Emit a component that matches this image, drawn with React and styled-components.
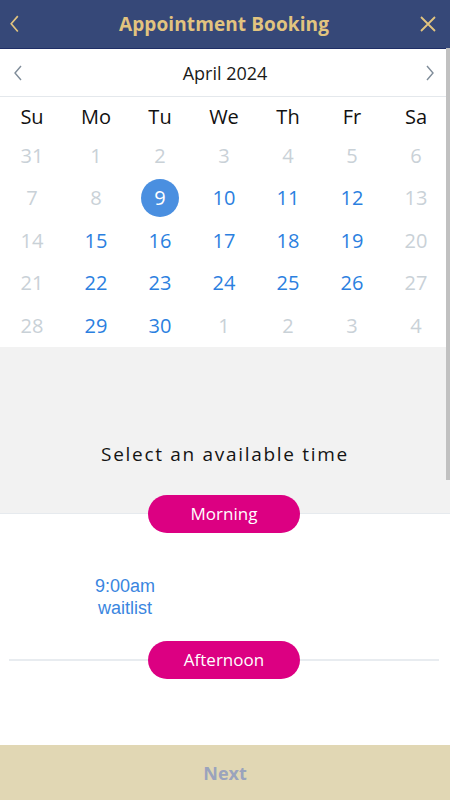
import React from "react";
import styled, { createGlobalStyle } from "styled-components";

const GlobalStyle = createGlobalStyle`
  html, body {
    margin: 0;
    padding: 0;
    background: #ffffff;
  }
  #root {
    width: 450px;
    height: 800px;
  }
`;

const Screen = styled.div`
  position: relative;
  width: 450px;
  height: 800px;
  display: flex;
  flex-direction: column;
  overflow: hidden;
  font-family: "Open Sans", "Liberation Sans", sans-serif;
  background: #ffffff;
`;

const Header = styled.header`
  height: 48px;
  flex-shrink: 0;
  background: #364878;
  border-bottom: 1px solid #1f2e66;
  display: flex;
  align-items: center;
  justify-content: space-between;
  padding: 0 8px 0 0;
`;

const Title = styled.h1`
  margin: 0 0 0 6px;
  font-size: 19px;
  font-weight: 700;
  color: #e2c47f;
  letter-spacing: 0.1px;
`;

const IconButton = styled.button`
  width: 28px;
  height: 28px;
  padding: 0;
  border: none;
  background: none;
  display: flex;
  align-items: center;
  justify-content: center;
`;

const MonthBar = styled.div`
  height: 47px;
  display: flex;
  align-items: center;
  justify-content: space-between;
  padding: 0 6px 0 4px;
  border-bottom: 1px solid #e4e8ec;
`;

const MonthLabel = styled.div`
  font-size: 18px;
  color: #1a1a1a;
  margin-left: 2px;
`;

const Grid = styled.div`
  width: 448px;
  display: grid;
  grid-template-columns: repeat(7, 64px);
  grid-auto-rows: ${(p) => p.$row}px;
  padding-top: ${(p) => p.$top || 0}px;
`;

const WeekDay = styled.div`
  display: flex;
  align-items: center;
  justify-content: center;
  font-size: 20px;
  color: #111111;
`;

const Day = styled.div`
  display: flex;
  align-items: center;
  justify-content: center;
  font-size: 20px;
  color: ${(p) => (p.$available ? "#2b7fe0" : "#c9d1d7")};
`;

const Selected = styled.span`
  width: 38px;
  height: 38px;
  border-radius: 50%;
  background: #4a8fe0;
  color: #ffffff;
  display: flex;
  align-items: center;
  justify-content: center;
`;

const Prompt = styled.div`
  height: 167px;
  background: #f2f2f2;
  border-bottom: 1px solid #e6eaee;
  display: flex;
  flex-direction: column;
  justify-content: flex-end;
  align-items: center;
  padding-bottom: 46px;
  box-sizing: border-box;
  font-size: 19px;
  letter-spacing: 1.7px;
  color: #141414;
`;

const PillRow = styled.div`
  display: flex;
  align-items: center;
  padding: 0 11px 0 9px;
  margin-top: ${(p) => p.$offset || 0}px;
`;

const Line = styled.div`
  flex: 1;
  height: 2px;
  background: ${(p) => (p.$show ? "#e8ecf0" : "transparent")};
`;

const Pill = styled.div`
  width: 152px;
  height: 38px;
  border-radius: 19px;
  background: #dc0082;
  color: #ffffff;
  font-size: 17px;
  display: flex;
  align-items: center;
  justify-content: center;
`;

const Slots = styled.div`
  display: grid;
  grid-template-columns: repeat(2, 150px);
  padding-left: 50px;
  margin-top: 42px;
  margin-bottom: 22px;
`;

const Slot = styled.div`
  text-align: center;
  font-family: "Liberation Sans", Arial, sans-serif;
  font-size: 18px;
  line-height: 22px;
  color: #3a86e0;
`;

const Spacer = styled.div`
  flex: 1;
`;

const Footer = styled.button`
  height: 55px;
  flex-shrink: 0;
  border: none;
  background: #e1d7b4;
  font-family: "Open Sans", sans-serif;
  font-size: 18px;
  font-weight: 700;
  color: #9aa3bd;
`;

const ScrollThumb = styled.div`
  position: absolute;
  right: 0;
  top: 48px;
  width: 4px;
  height: 432px;
  background: #c1c1c1;
`;

const Chevron = ({ dir, color, size = 16, stroke = 1.6 }) => (
  <svg width={size} height={size * 1.6} viewBox="0 0 10 16">
    <polyline
      points={dir === "left" ? "8,1 2,8 8,15" : "2,1 8,8 2,15"}
      fill="none"
      stroke={color}
      strokeWidth={stroke}
    />
  </svg>
);

const Close = () => (
  <svg width="16" height="16" viewBox="0 0 16 16">
    <path d="M1 1 L15 15 M15 1 L1 15" stroke="#e2c47f" strokeWidth="1.8" />
  </svg>
);

const weekDays = ["Su", "Mo", "Tu", "We", "Th", "Fr", "Sa"];
const weeks = [
  [31, 1, 2, 3, 4, 5, 6],
  [7, 8, 9, 10, 11, 12, 13],
  [14, 15, 16, 17, 18, 19, 20],
  [21, 22, 23, 24, 25, 26, 27],
  [28, 29, 30, 1, 2, 3, 4],
];

function isAvailable(w, d) {
  if (d === 0 || d === 6) return false;
  if (w === 0) return false;
  if (w === 1 && d === 1) return false;
  if (w === 4 && d > 2) return false;
  return true;
}

export default function App() {
  return (
    <Screen>
      <GlobalStyle />
      <Header>
        <IconButton>
          <Chevron dir="left" color="#e2c47f" size={11} stroke={1.5} />
        </IconButton>
        <Title>Appointment Booking</Title>
        <IconButton>
          <Close />
        </IconButton>
      </Header>
      <MonthBar>
        <IconButton>
          <Chevron dir="left" color="#7f8c99" size={10} stroke={1.4} />
        </IconButton>
        <MonthLabel>April 2024</MonthLabel>
        <IconButton>
          <Chevron dir="right" color="#7f8c99" size={10} stroke={1.4} />
        </IconButton>
      </MonthBar>
      <Grid $row={36} $top={1}>
        {weekDays.map((d) => (
          <WeekDay key={d}>{d}</WeekDay>
        ))}
      </Grid>
      <Grid $row={42.5}>
        {weeks.map((week, w) =>
          week.map((day, d) => (
            <Day key={`${w}-${d}`} $available={isAvailable(w, d)}>
              {w === 1 && day === 9 ? <Selected>9</Selected> : day}
            </Day>
          ))
        )}
      </Grid>
      <Prompt>Select an available time</Prompt>
      <PillRow $offset={-19}>
        <Line />
        <Pill>Morning</Pill>
        <Line />
      </PillRow>
      <Slots>
        <Slot>
          9:00am
          <br />
          waitlist
        </Slot>
      </Slots>
      <PillRow>
        <Line $show />
        <Pill>Afternoon</Pill>
        <Line $show />
      </PillRow>
      <Spacer />
      <Footer>Next</Footer>
      <ScrollThumb />
    </Screen>
  );
}
